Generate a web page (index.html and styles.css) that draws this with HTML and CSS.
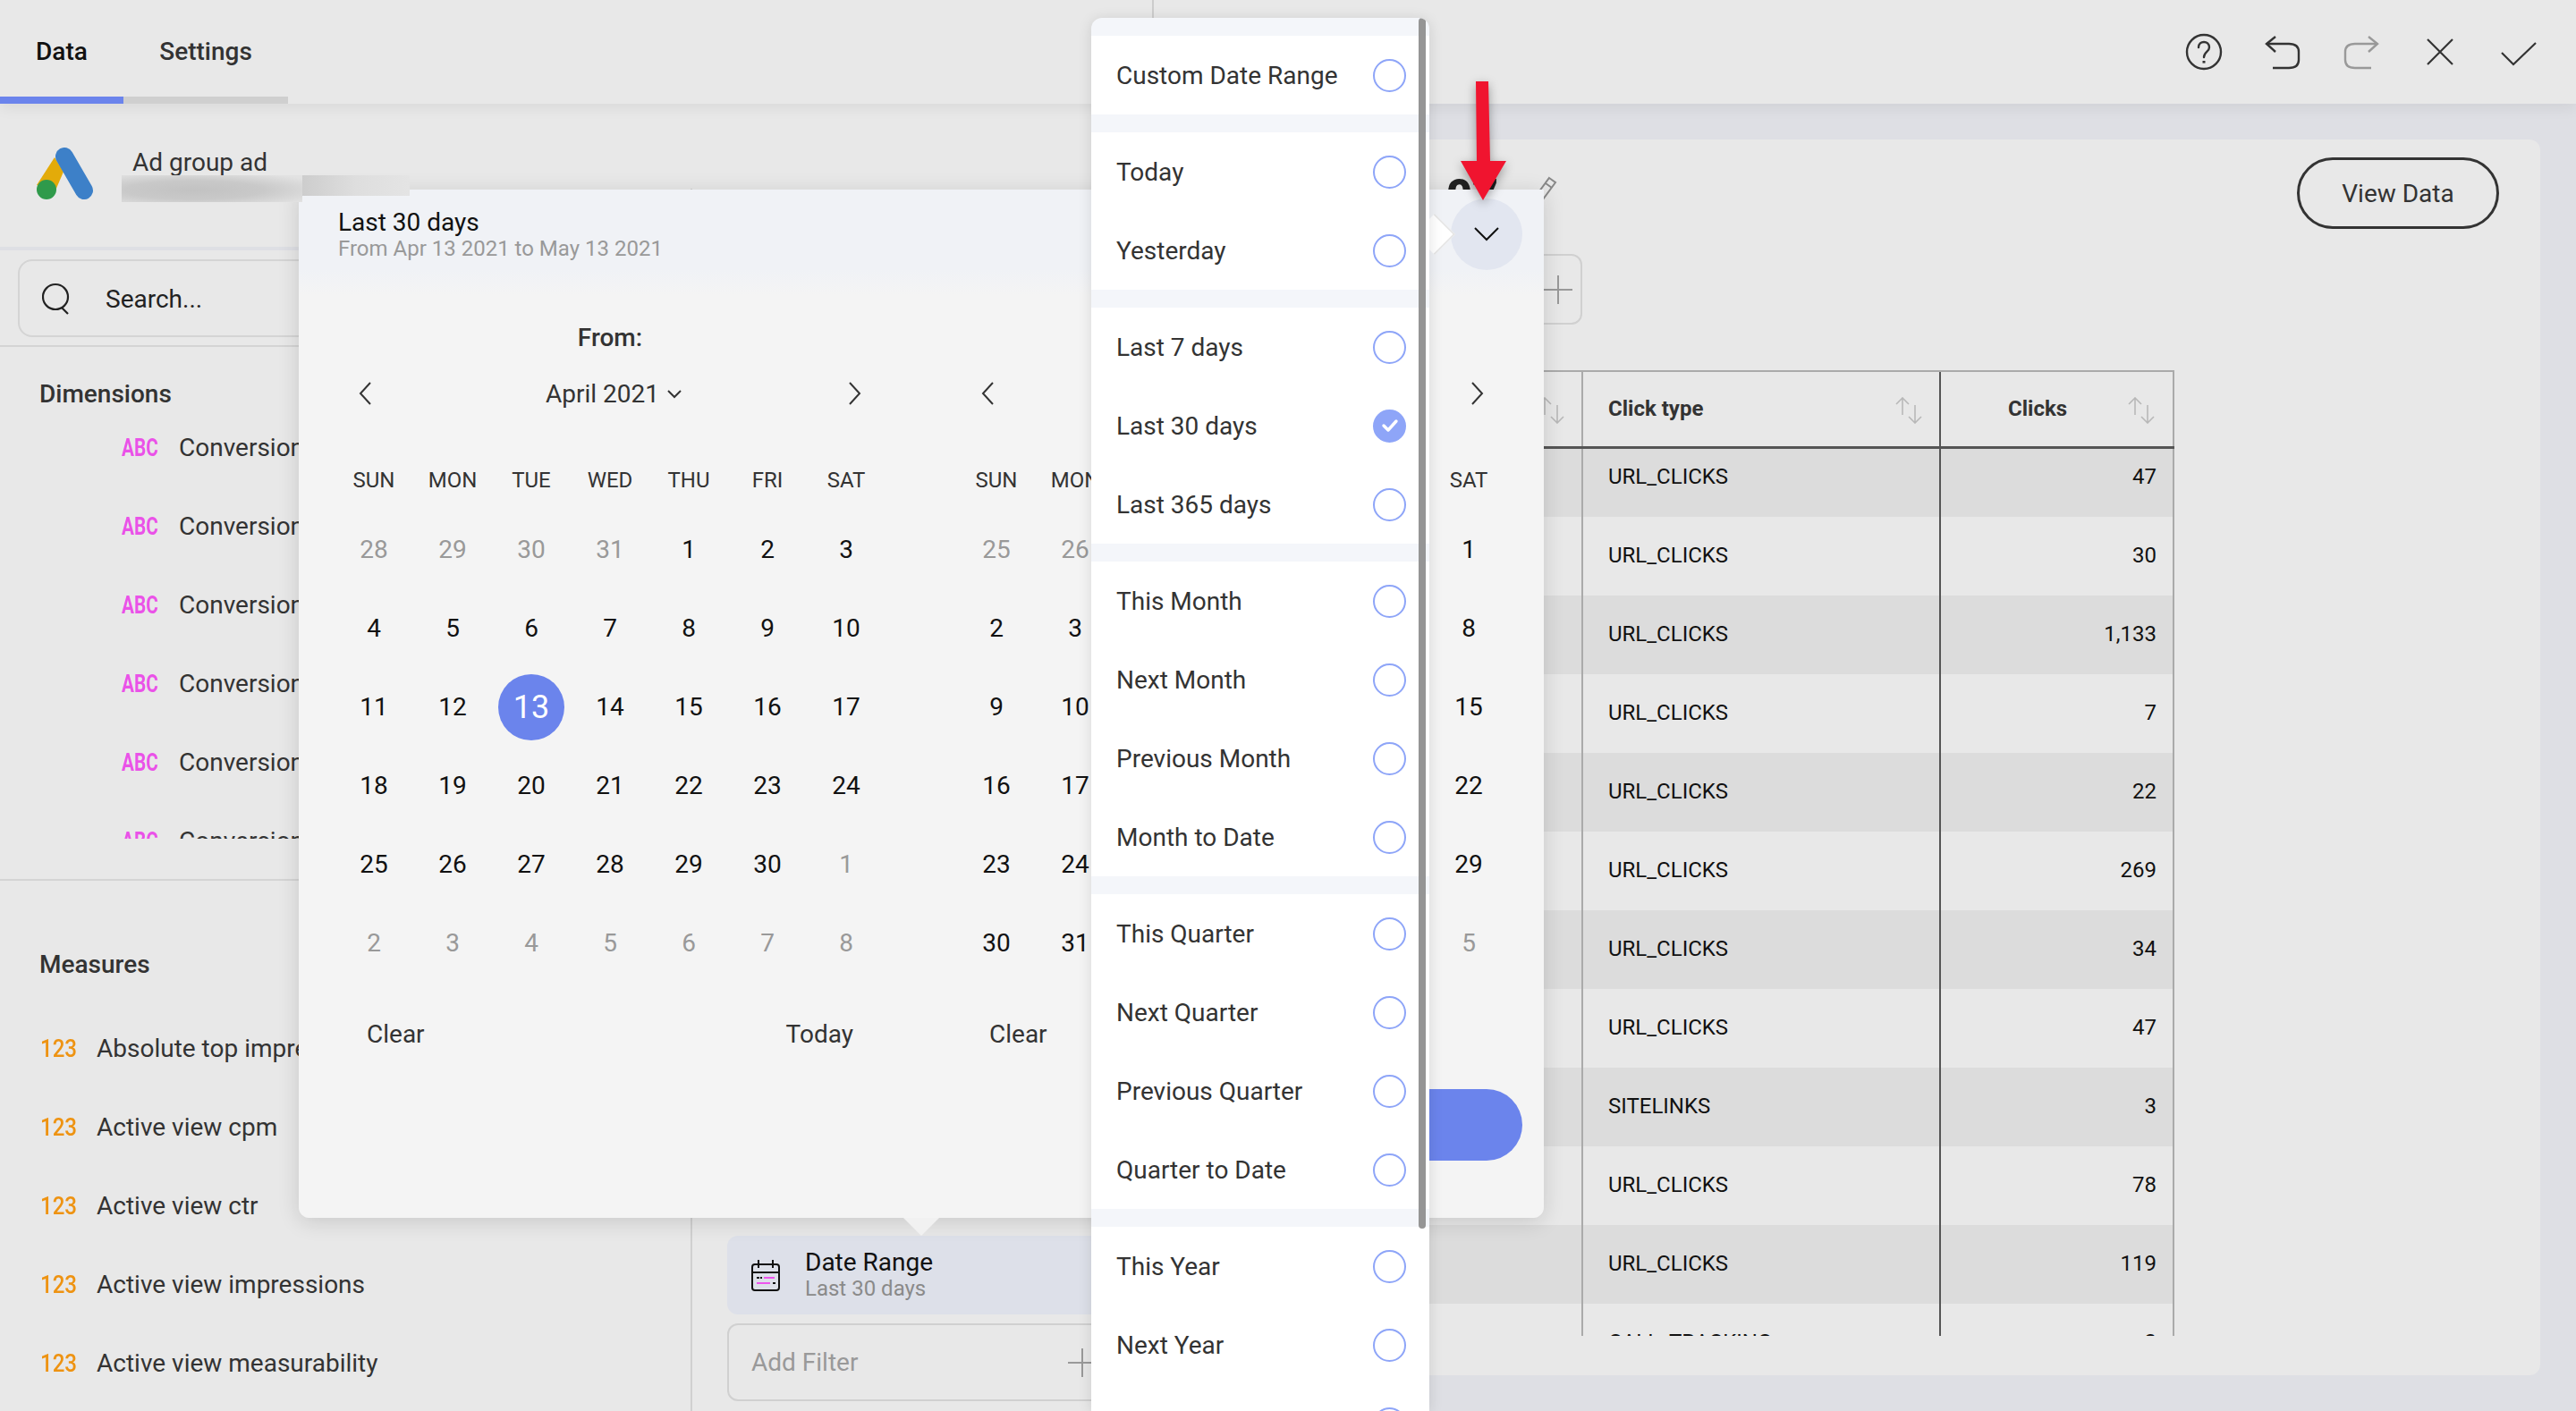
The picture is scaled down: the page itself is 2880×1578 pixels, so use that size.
FILE: index.html
```html
<!DOCTYPE html>
<html>
<head>
    <meta charset="utf-8">
    <title>Date Range</title>
    <link rel="stylesheet" href="styles.css">
</head>
<body>
<div class="app">
    <header class="topbar">
        <div class="topbar-left">
            <div class="tab active">Data</div>
            <div class="tab">Settings</div>
        </div>
        <div class="toolbar">
            <div class="tool"><svg width="44" height="44" viewBox="0 0 44 44" fill="none" stroke="#333" stroke-width="2.4"><circle cx="22" cy="22" r="19"/><path d="M16 17c0-4 3-6 6-6s6 2 6 6c0 5-6 5-6 11" stroke-linecap="round"/><path d="M22 32v2.6" stroke-width="3"/></svg></div>
            <div class="tool"><svg width="44" height="44" viewBox="0 0 44 44" fill="none" stroke="#333" stroke-width="2.4"><path d="M14 5L4 13l10 9"/><path d="M4 13h25q11 0 11 9v9q0 9-11 9H11"/></svg></div>
            <div class="tool"><svg width="44" height="44" viewBox="0 0 44 44" fill="none" stroke="#999" stroke-width="2.4"><path d="M30 5l10 8-10 9"/><path d="M40 13H15Q4 13 4 22v9q0 9 11 9h18"/></svg></div>
            <div class="tool"><svg width="44" height="44" viewBox="0 0 44 44" fill="none" stroke="#333" stroke-width="2.2"><path d="M8 8l28 28M36 8L8 36"/></svg></div>
            <div class="tool"><svg width="44" height="44" viewBox="0 0 44 44" fill="none" stroke="#333" stroke-width="2.2"><path d="M3 23l13 13L41 12"/></svg></div>
        </div>
    </header>

    <div class="workspace">
        <aside class="sidebar">
            <div class="brand">
                <svg class="brand-logo" width="64" height="58" viewBox="0 0 64 58"><path d="M20 11L30 27 21 48 0 42z" fill="#e3ab09"/><path d="M31 10L53 48" stroke="#3d80c8" stroke-width="20" stroke-linecap="round"/><circle cx="11" cy="47" r="11" fill="#2f9a4b"/></svg>
                <div class="brand-name">Ad group ad</div>
            </div>
            <div class="search-row">
                <div class="search">
                    <svg width="32" height="36" viewBox="0 0 32 36" fill="none" stroke="#222" stroke-width="2.2"><circle cx="15" cy="16" r="14"/><path d="M22 28l7 7"/></svg>
                    <span>Search...</span>
                </div>
            </div>
            <div class="dimensions">
                <h4 class="side-title">Dimensions</h4>
                <div class="dim-list">
                    <div class="field"><span class="tag abc">ABC</span>Conversion action</div>
                    <div class="field"><span class="tag abc">ABC</span>Conversion category</div>
                    <div class="field"><span class="tag abc">ABC</span>Conversion name</div>
                    <div class="field"><span class="tag abc">ABC</span>Conversion source</div>
                    <div class="field"><span class="tag abc">ABC</span>Conversion type</div>
                    <div class="field"><span class="tag abc">ABC</span>Conversion value</div>
                </div>
            </div>
            <div class="measures">
                <h4 class="side-title">Measures</h4>
                <div class="field"><span class="tag num">123</span>Absolute top impression share</div>
                <div class="field"><span class="tag num">123</span>Active view cpm</div>
                <div class="field"><span class="tag num">123</span>Active view ctr</div>
                <div class="field"><span class="tag num">123</span>Active view impressions</div>
                <div class="field"><span class="tag num">123</span>Active view measurability</div>
            </div>
        </aside>

        <section class="filters">
            <div class="filter-chip">
                <svg width="32" height="36" viewBox="0 0 32 36" fill="none" stroke="#111" stroke-width="2"><rect x="1" y="6" width="30" height="29" rx="3"/><path d="M1 15h30M8 1v9M24 1v9"/><path d="M6 21h6" stroke-dasharray="3 1"/><path d="M14 21h12M6 27h15" stroke="#ee55ee"/><path d="M24 27h3"/></svg>
                <div>
                    <div class="chip-title">Date Range</div>
                    <div class="chip-sub">Last 30 days</div>
                </div>
            </div>
            <div class="add-filter">
                <span>Add Filter</span>
                <svg width="32" height="32" viewBox="0 0 32 32" stroke="#999" stroke-width="2"><path d="M0 16h32M16 0v32"/></svg>
            </div>
        </section>

        <main class="main">
            <div class="panel">
                <div class="panel-head">
                    <div class="panel-left">
                        <div class="panel-title">
                            <span>07</span>
                            <svg width="26" height="28" viewBox="0 0 26 28" fill="none" stroke="#888" stroke-width="2"><path d="M15 3l7 5-14 19-7-5z"/><path d="M11 9l7 5"/></svg>
                        </div>
                        <div class="add-box">
                            <svg width="32" height="32" viewBox="0 0 32 32" stroke="#999" stroke-width="2"><path d="M0 16h32M16 0v32"/></svg>
                        </div>
                    </div>
                    <button class="view-data">View Data</button>
                </div>

                <div class="table">
                    <div class="t-head">
                        <div class="t-cell"><svg class="sort" width="30" height="30" viewBox="0 0 30 30" fill="none" stroke="#b8b8b8" stroke-width="1.6"><path d="M8 20V1M1 8l7-7 7 7M22 9v20M15 22l7 7 7-7"/></svg></div>
                        <div class="t-cell col-type"><span class="t-label">Click type</span><svg class="sort" width="30" height="30" viewBox="0 0 30 30" fill="none" stroke="#b8b8b8" stroke-width="1.6"><path d="M8 20V1M1 8l7-7 7 7M22 9v20M15 22l7 7 7-7"/></svg></div>
                        <div class="t-cell col-clicks"><span class="t-label">Clicks</span><svg class="sort" width="30" height="30" viewBox="0 0 30 30" fill="none" stroke="#b8b8b8" stroke-width="1.6"><path d="M8 20V1M1 8l7-7 7 7M22 9v20M15 22l7 7 7-7"/></svg></div>
                    </div>
                    <div class="t-body">
                        <div class="t-rows">
                            <div class="t-row"><div></div><div class="col-type">URL_CLICKS</div><div class="col-clicks">47</div></div>
                            <div class="t-row"><div></div><div class="col-type">URL_CLICKS</div><div class="col-clicks">30</div></div>
                            <div class="t-row"><div></div><div class="col-type">URL_CLICKS</div><div class="col-clicks">1,133</div></div>
                            <div class="t-row"><div></div><div class="col-type">URL_CLICKS</div><div class="col-clicks">7</div></div>
                            <div class="t-row"><div></div><div class="col-type">URL_CLICKS</div><div class="col-clicks">22</div></div>
                            <div class="t-row"><div></div><div class="col-type">URL_CLICKS</div><div class="col-clicks">269</div></div>
                            <div class="t-row"><div></div><div class="col-type">URL_CLICKS</div><div class="col-clicks">34</div></div>
                            <div class="t-row"><div></div><div class="col-type">URL_CLICKS</div><div class="col-clicks">47</div></div>
                            <div class="t-row"><div></div><div class="col-type">SITELINKS</div><div class="col-clicks">3</div></div>
                            <div class="t-row"><div></div><div class="col-type">URL_CLICKS</div><div class="col-clicks">78</div></div>
                            <div class="t-row"><div></div><div class="col-type">URL_CLICKS</div><div class="col-clicks">119</div></div>
                            <div class="t-row"><div></div><div class="col-type">CALL_TRACKING</div><div class="col-clicks">2</div></div>
                        </div>
                    </div>
                </div>
            </div>
        </main>
    </div>

    <!-- date picker popover -->
    <div class="picker">
        <div class="picker-head">
            <div class="picker-title">Last 30 days</div>
            <div class="picker-sub">From Apr 13 2021 to May 13 2021</div>
        </div>
        <div class="calendars">
            <div class="cal">
                <div class="cal-label">From:</div>
                <div class="cal-month">
                    <svg width="14" height="26" viewBox="0 0 14 26" fill="none" stroke="#333" stroke-width="2"><path d="M13 1L2 13l11 12"/></svg>
                    <span class="month-name">April 2021 <svg width="16" height="10" viewBox="0 0 16 10" fill="none" stroke="#333" stroke-width="2"><path d="M1 1l7 7 7-7"/></svg></span>
                    <svg width="14" height="26" viewBox="0 0 14 26" fill="none" stroke="#333" stroke-width="2"><path d="M1 1l11 12L1 25"/></svg>
                </div>
                <div class="weekdays"><span>SUN</span><span>MON</span><span>TUE</span><span>WED</span><span>THU</span><span>FRI</span><span>SAT</span></div>
                <div class="days">
                    <span class="off">28</span><span class="off">29</span><span class="off">30</span><span class="off">31</span><span>1</span><span>2</span><span>3</span>
                    <span>4</span><span>5</span><span>6</span><span>7</span><span>8</span><span>9</span><span>10</span>
                    <span>11</span><span>12</span><span class="sel">13</span><span>14</span><span>15</span><span>16</span><span>17</span>
                    <span>18</span><span>19</span><span>20</span><span>21</span><span>22</span><span>23</span><span>24</span>
                    <span>25</span><span>26</span><span>27</span><span>28</span><span>29</span><span>30</span><span class="off">1</span>
                    <span class="off">2</span><span class="off">3</span><span class="off">4</span><span class="off">5</span><span class="off">6</span><span class="off">7</span><span class="off">8</span>
                </div>
                <div class="cal-foot"><span>Clear</span><span>Today</span></div>
            </div>
            <div class="cal">
                <div class="cal-label">To:</div>
                <div class="cal-month">
                    <svg width="14" height="26" viewBox="0 0 14 26" fill="none" stroke="#333" stroke-width="2"><path d="M13 1L2 13l11 12"/></svg>
                    <span class="month-name">May 2021</span>
                    <svg width="14" height="26" viewBox="0 0 14 26" fill="none" stroke="#333" stroke-width="2"><path d="M1 1l11 12L1 25"/></svg>
                </div>
                <div class="weekdays"><span>SUN</span><span>MON</span><span>TUE</span><span>WED</span><span>THU</span><span>FRI</span><span>SAT</span></div>
                <div class="days">
                    <span class="off">25</span><span class="off">26</span><span class="off">27</span><span class="off">28</span><span class="off">29</span><span class="off">30</span><span>1</span>
                    <span>2</span><span>3</span><span>4</span><span>5</span><span>6</span><span>7</span><span>8</span>
                    <span>9</span><span>10</span><span>11</span><span>12</span><span>13</span><span>14</span><span>15</span>
                    <span>16</span><span>17</span><span>18</span><span>19</span><span>20</span><span>21</span><span>22</span>
                    <span>23</span><span>24</span><span>25</span><span>26</span><span>27</span><span>28</span><span>29</span>
                    <span>30</span><span>31</span><span class="off">1</span><span class="off">2</span><span class="off">3</span><span class="off">4</span><span class="off">5</span>
                </div>
                <div class="cal-foot"><span>Clear</span></div>
            </div>
        </div>
        <div class="picker-actions"><button class="apply">Apply</button></div>
        <div class="picker-toggle"><svg width="28" height="16" viewBox="0 0 28 16" fill="none" stroke="#111" stroke-width="2"><path d="M1 1l13 13L27 1"/></svg></div>
        <div class="picker-tail"></div>
    </div>

    <!-- redacted account name -->
    <div class="redact redact-a"></div>
    <div class="redact redact-b"></div>

    <!-- preset list -->
    <div class="presets-tip"></div>
    <div class="presets">
        <div class="preset-group">
            <div class="preset">Custom Date Range<i class="radio"></i></div>
        </div>
        <div class="preset-group">
            <div class="preset">Today<i class="radio"></i></div>
            <div class="preset">Yesterday<i class="radio"></i></div>
        </div>
        <div class="preset-group">
            <div class="preset">Last 7 days<i class="radio"></i></div>
            <div class="preset">Last 30 days<i class="radio checked"><svg width="20" height="16" viewBox="0 0 20 16" fill="none" stroke="#fff" stroke-width="3.4" stroke-linecap="round" stroke-linejoin="round"><path d="M3 8l5 5 9-10"/></svg></i></div>
            <div class="preset">Last 365 days<i class="radio"></i></div>
        </div>
        <div class="preset-group">
            <div class="preset">This Month<i class="radio"></i></div>
            <div class="preset">Next Month<i class="radio"></i></div>
            <div class="preset">Previous Month<i class="radio"></i></div>
            <div class="preset">Month to Date<i class="radio"></i></div>
        </div>
        <div class="preset-group">
            <div class="preset">This Quarter<i class="radio"></i></div>
            <div class="preset">Next Quarter<i class="radio"></i></div>
            <div class="preset">Previous Quarter<i class="radio"></i></div>
            <div class="preset">Quarter to Date<i class="radio"></i></div>
        </div>
        <div class="preset-group">
            <div class="preset">This Year<i class="radio"></i></div>
            <div class="preset">Next Year<i class="radio"></i></div>
            <div class="preset">Previous Year<i class="radio"></i></div>
        </div>
        <div class="presets-scroll"></div>
    </div>

    <svg class="red-arrow" width="60" height="140" viewBox="0 0 60 140"><path d="M20 0h14l2 89h18L28 133 3 89h18z" fill="#f0142f"/></svg>
</div>
</body>
</html>
```

FILE: styles.css
```css
* {
    box-sizing: border-box;
}

body {
    margin: 0;
    font-family: "Roboto", "Liberation Sans", sans-serif;
    font-size: 28px;
    color: #333;
    background: #dedfe4;
}

h4 {
    margin: 0;
}

button {
    font: inherit;
}

.app {
    position: relative;
    width: 2880px;
    height: 1578px;
    overflow: hidden;
}

/* top bar */
.topbar {
    position: relative;
    z-index: 1;
    display: flex;
    justify-content: space-between;
    height: 116px;
    background: #e8e8e8;
    box-shadow: 0 4px 16px rgba(0, 0, 0, 0.07);
}

.topbar-left {
    display: flex;
    width: 1290px;
    border-right: 2px solid #ccc;
}

.tab {
    width: 184px;
    height: 116px;
    padding-top: 8px;
    line-height: 100px;
    text-align: center;
    font-weight: 500;
    border-bottom: 8px solid #cfcfcf;
}

.tab.active {
    width: 138px;
    color: #111;
    border-bottom-color: #6b84ec;
}

.toolbar {
    display: flex;
    padding-right: 20px;
}

.tool {
    display: flex;
    align-items: center;
    justify-content: center;
    width: 88px;
}

/* layout below the bar */
.workspace {
    display: flex;
    height: 1462px;
}

.sidebar {
    width: 772px;
    background: #e8e8e8;
}

.brand {
    display: flex;
    height: 160px;
    padding: 49px 0 0 41px;
}

.brand-name {
    margin: 1px 0 0 43px;
    line-height: 32px;
}

.search-row {
    height: 112px;
    padding: 10px 20px;
    border-top: 4px solid #dedfe4;
    border-bottom: 2px solid #d4d4d4;
}

.search {
    display: flex;
    align-items: center;
    gap: 39px;
    height: 87px;
    padding-left: 25px;
    color: #222;
    border: 2px solid #d4d4d4;
    border-radius: 16px;
}

.search span {
    padding-top: 2px;
}

.side-title {
    height: 44px;
    font-size: 28px;
    font-weight: 500;
    line-height: 44px;
}

.dimensions {
    height: 597px;
    padding: 31px 0 0 44px;
    border-bottom: 2px solid #d4d4d4;
}

.dim-list {
    height: 482px;
    margin-top: -7px;
    margin-left: 92px;
    overflow: hidden;
}

.field {
    display: flex;
    align-items: center;
    height: 88px;
    white-space: nowrap;
}

.measures {
    padding: 72px 0 0 45px;
}

.measures .side-title {
    margin: 0 0 27px -1px;
}

.tag {
    display: inline-block;
    flex: none;
    font-weight: 500;
    transform-origin: left center;
}

.abc {
    width: 64px;
    font-weight: 700;
    color: #ea52e8;
    transform: scaleX(0.74);
}

.num {
    width: 63px;
    color: #ee9312;
    transform: scaleX(0.86);
}

.filters {
    display: flex;
    flex-direction: column;
    justify-content: flex-end;
    gap: 10px;
    width: 498px;
    padding: 0 20px 11px 39px;
    border-left: 2px solid transparent;
    border-image: linear-gradient(transparent 96px, #d0d0d0 96px) 1;
    background: #e8e8e8;
}

.filter-chip {
    display: flex;
    align-items: center;
    gap: 28px;
    height: 88px;
    padding-left: 27px;
    background: #dde0e9;
    border-radius: 12px;
}

.chip-title {
    line-height: 30px;
    color: #111;
}

.chip-sub {
    font-size: 24px;
    line-height: 28px;
    color: #8a8a8a;
}

.add-filter {
    display: flex;
    align-items: center;
    justify-content: space-between;
    height: 87px;
    padding: 0 22px 0 25px;
    color: #999;
    border: 2px solid #d0d0d0;
    border-radius: 12px;
}

/* report panel */
.main {
    flex: 1;
    padding: 40px 40px 40px 20px;
}

.panel {
    height: 100%;
    padding: 20px 46px 0 20px;
    background: #e8e8e8;
    border-radius: 12px;
}

.panel-head {
    display: flex;
    justify-content: space-between;
    height: 238px;
}

.panel-left {
    width: 459px;
}

.panel-title {
    display: flex;
    align-items: flex-start;
    gap: 42px;
    height: 75px;
    padding: 13px 0 0 307px;
    font-size: 50px;
    font-weight: 900;
    line-height: 60px;
    white-space: nowrap;
    color: #222;
}

.panel-title svg {
    flex: none;
    margin-top: 7px;
}

.add-box {
    display: flex;
    align-items: center;
    justify-content: flex-end;
    height: 79px;
    margin-top: 33px;
    padding-right: 9px;
    border: 2px solid #d0d0d0;
    border-radius: 12px;
}

.view-data {
    width: 226px;
    height: 80px;
    color: #333;
    background: none;
    border: 3px solid #333;
    border-radius: 40px;
}

.table {
    width: 1121px;
    color: #111;
    font-size: 24px;
}

.t-head {
    display: grid;
    grid-template-columns: 458px 400px 263px;
    height: 88px;
    border-top: 2px solid #aaa;
    border-bottom: 3px solid #555;
}

.t-cell {
    display: flex;
    align-items: center;
    justify-content: space-between;
    padding-right: 19px;
    padding-left: 28px;
}

.t-cell:first-child {
    justify-content: flex-end;
}

.sort {
    flex: none;
    margin-top: 2px;
}

.t-label {
    font-weight: 700;
    color: #333;
    margin-top: -1px;
}

.t-cell.col-clicks {
    padding-right: 20px;
    padding-left: 75px;
    border-right: 2px solid #aaa;
}

.t-body {
    height: 992px;
    overflow: hidden;
}

.t-rows {
    margin-top: -12px;
}

.t-row {
    display: grid;
    grid-template-columns: 458px 400px 263px;
    height: 88px;
    line-height: 86px;
}

.t-row:nth-child(odd) {
    background: #dcdcdc;
}

.col-type {
    padding-left: 28px;
    border-left: 2px solid #aaa;
}

.col-clicks {
    padding-right: 18px;
    text-align: right;
    border-left: 2px solid #555;
    border-right: 2px solid #aaa;
}

.t-cell.col-type,
.t-cell.col-clicks {
    text-align: left;
}

/* date picker popover */
.picker {
    position: absolute;
    z-index: 2;
    top: 212px;
    left: 334px;
    width: 1392px;
    height: 1150px;
    background: linear-gradient(#f0f2f6 0, #f0f2f6 90px, #f4f4f4 118px);
    border-radius: 0 0 12px 12px;
    box-shadow: 0 4px 24px rgba(0, 0, 0, 0.14);
}

.picker-head {
    height: 146px;
    padding: 21px 0 0 44px;
}

.picker-title {
    line-height: 31px;
    color: #111;
}

.picker-sub {
    font-size: 24px;
    line-height: 28px;
    color: #999;
}

.calendars {
    display: flex;
    gap: 80px;
    padding: 0 40px;
}

.cal {
    width: 616px;
    flex: none;
}

.cal-label {
    height: 50px;
    font-weight: 500;
    line-height: 40px;
    text-align: center;
}

.cal-month {
    display: flex;
    align-items: center;
    justify-content: space-between;
    height: 64px;
    padding: 0 27px;
    margin-bottom: 30px;
}

.month-name {
    margin-left: 8px;
}

.month-name svg {
    margin-left: 2px;
    vertical-align: 4px;
}

.weekdays,
.days {
    display: grid;
    grid-template-columns: repeat(7, 88px);
    text-align: center;
}

.weekdays {
    height: 68px;
    font-size: 24px;
    line-height: 70px;
}

.days span {
    display: flex;
    align-items: center;
    justify-content: center;
    height: 88px;
    color: #111;
}

.days .off {
    color: #999;
}

.days .sel {
    width: 74px;
    height: 74px;
    margin: 8px 7px 6px;
    font-size: 36px;
    color: #fff;
    background: #6b84ec;
    border-radius: 50%;
}

.cal-foot {
    display: flex;
    justify-content: space-between;
    height: 46px;
    margin-top: 34px;
    padding: 0 36px;
    line-height: 50px;
}

.picker-actions {
    display: flex;
    justify-content: flex-end;
    padding: 40px 24px 0 0;
}

.apply {
    width: 300px;
    height: 80px;
    color: #fff;
    background: #6b84ec;
    border: 0;
    border-radius: 40px;
}

.picker-toggle {
    position: absolute;
    top: 10px;
    left: 1288px;
    display: flex;
    align-items: center;
    justify-content: center;
    width: 80px;
    height: 80px;
    background: #e2e6f0;
    border-radius: 50%;
}

.picker-tail {
    position: absolute;
    top: 1150px;
    left: 676px;
    width: 0;
    height: 0;
    border-top: 20px solid #f1f1f1;
    border-left: 20px solid transparent;
    border-right: 20px solid transparent;
}

.redact {
    position: absolute;
    z-index: 3;
    top: 196px;
    background: radial-gradient(ellipse at 40% 55%, #c2c2c2 0, #c9c9c9 45%, #e2e2e2 90%);
}

.redact-a {
    left: 136px;
    width: 202px;
    height: 30px;
}

.redact-b {
    left: 338px;
    width: 120px;
    height: 23px;
    background: linear-gradient(90deg, #cdcdcd, #dedede 50%, #e4e4e4);
}

/* preset list */
.presets {
    position: absolute;
    z-index: 4;
    top: 20px;
    left: 1220px;
    display: flex;
    flex-direction: column;
    gap: 20px;
    width: 378px;
    height: 1558px;
    padding-top: 20px;
    overflow: hidden;
    background: #f4f6fa;
    border-radius: 12px 12px 0 0;
    box-shadow: 0 2px 16px rgba(0, 0, 0, 0.12);
}

.preset-group {
    flex: none;
    background: #fff;
}

.preset {
    display: flex;
    align-items: center;
    justify-content: space-between;
    height: 88px;
    padding: 0 26px 0 28px;
    white-space: nowrap;
}

.radio {
    display: flex;
    align-items: center;
    justify-content: center;
    width: 37px;
    height: 37px;
    border: 2px solid #8ea5f8;
    border-radius: 50%;
}

.radio.checked {
    background: #8ea5f8;
}

.presets-scroll {
    position: absolute;
    top: 0;
    left: 366px;
    width: 8px;
    height: 1354px;
    background: #959595;
    border-radius: 4px;
}

.presets-tip {
    position: absolute;
    z-index: 3;
    top: 244px;
    left: 1586px;
    width: 36px;
    height: 36px;
    background: #fff;
    border-top: 2px solid #e6e6e6;
    border-right: 2px solid #e6e6e6;
    transform: rotate(45deg) scale(0.9);
}

.red-arrow {
    position: absolute;
    z-index: 5;
    top: 91px;
    left: 1630px;
    filter: drop-shadow(0 4px 6px rgba(0, 0, 0, 0.35));
}
```
